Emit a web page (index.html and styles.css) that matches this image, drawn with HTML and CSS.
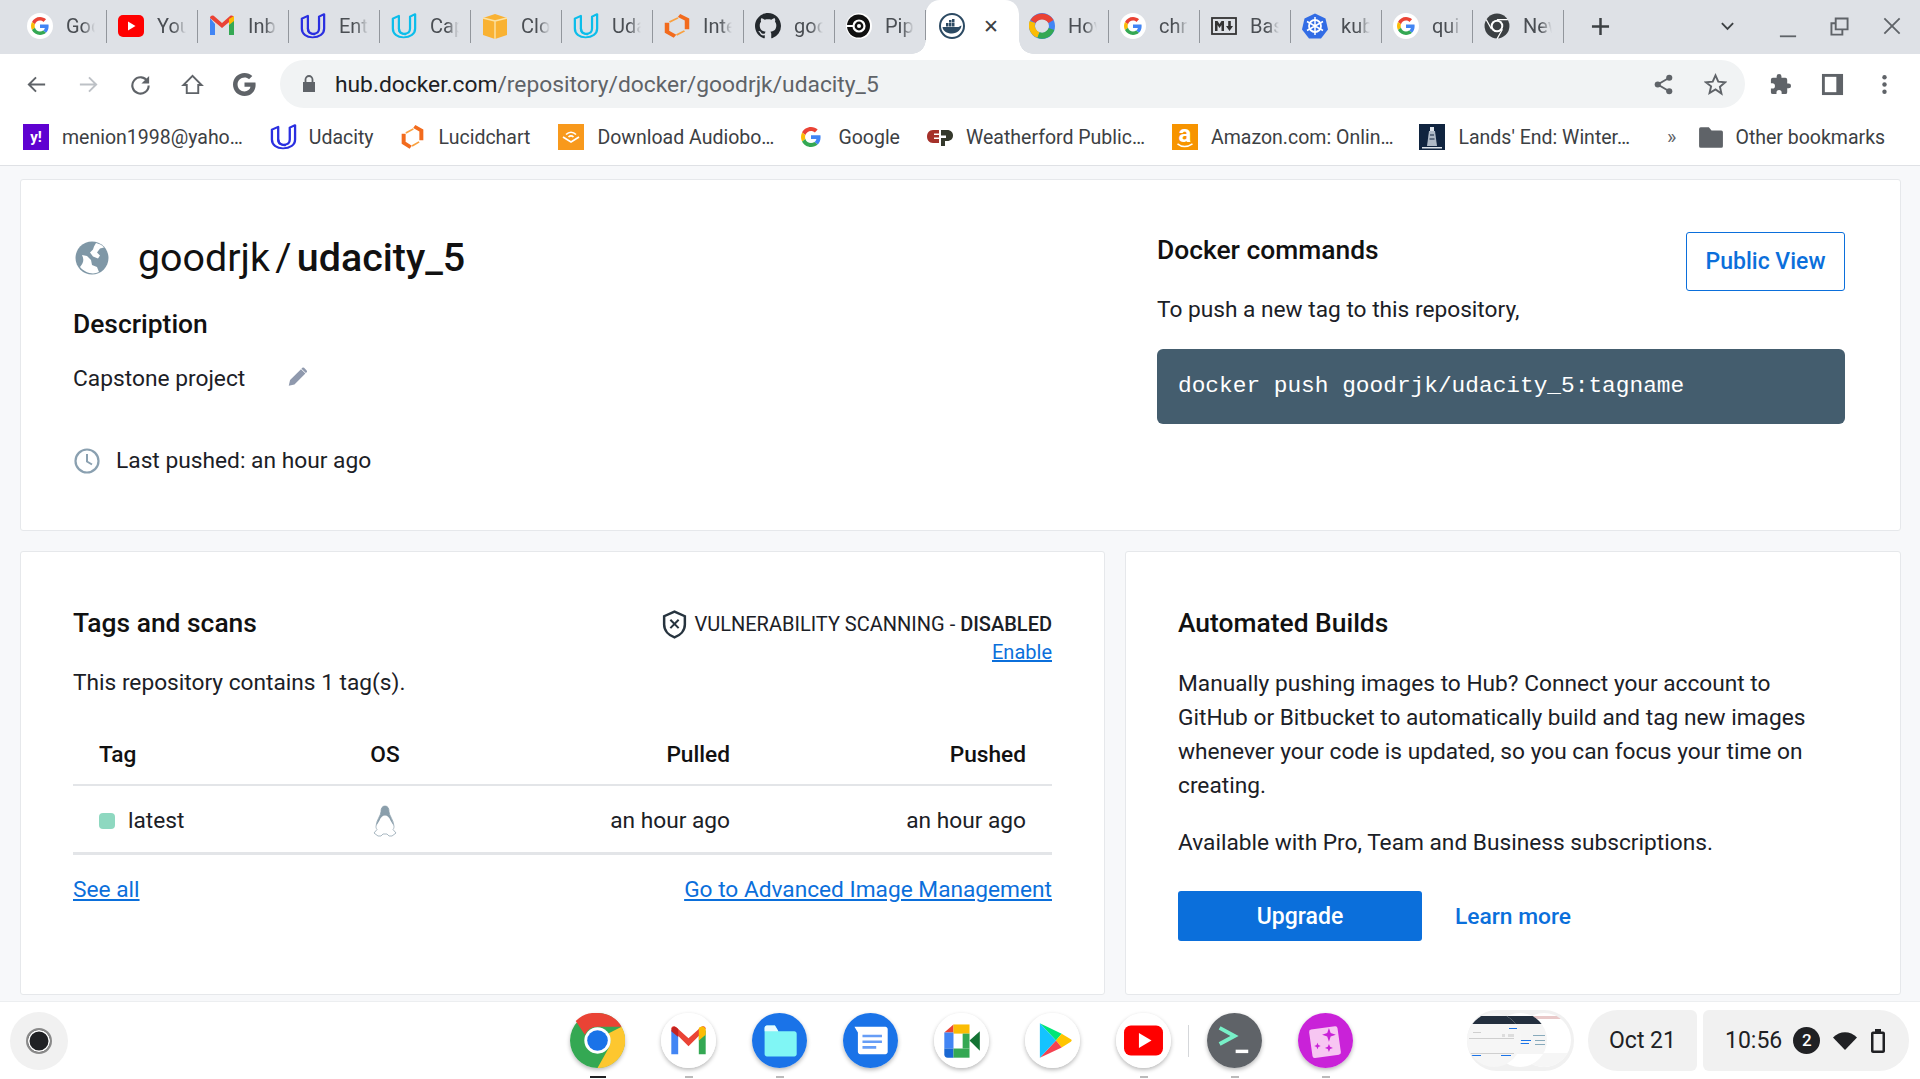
FILE: index.html
```html
<!DOCTYPE html>
<html lang="en">
<head>
<meta charset="utf-8">
<title>goodrjk / udacity_5</title>
<link rel="stylesheet" href="styles.css">
</head>
<body>
<svg class="defs" width="0" height="0" aria-hidden="true">
  <defs>
    <symbol id="g" viewBox="0 0 48 48">
      <path fill="#EA4335" d="M24 9.5c3.54 0 6.71 1.22 9.21 3.6l6.85-6.85C35.9 2.38 30.47 0 24 0 14.62 0 6.51 5.38 2.56 13.22l7.98 6.19C12.43 13.72 17.74 9.5 24 9.5z"/>
      <path fill="#4285F4" d="M46.98 24.55c0-1.57-.15-3.09-.38-4.55H24v9.02h12.94c-.58 2.96-2.26 5.48-4.78 7.18l7.73 6c4.51-4.18 7.09-10.36 7.09-17.65z"/>
      <path fill="#FBBC05" d="M10.53 28.59c-.48-1.45-.76-2.99-.76-4.59s.27-3.14.76-4.59l-7.98-6.19C.92 16.46 0 20.12 0 24c0 3.88.92 7.54 2.56 10.78l7.97-6.19z"/>
      <path fill="#34A853" d="M24 48c6.48 0 11.93-2.13 15.89-5.81l-7.73-6c-2.15 1.45-4.92 2.3-8.16 2.3-6.26 0-11.57-4.22-13.47-9.91l-7.98 6.19C6.51 42.62 14.62 48 24 48z"/>
    </symbol>
    <symbol id="gfav" viewBox="0 0 26 26">
      <circle cx="13" cy="13" r="13" fill="#fff"/>
      <svg x="4" y="4" width="18" height="18" viewBox="0 0 48 48"><use href="#g"/></svg>
    </symbol>
    <symbol id="uda" viewBox="0 0 28 32" preserveAspectRatio="none">
      <path fill="none" stroke="currentColor" stroke-width="2.400" stroke-linejoin="round" d="M2 7 8.500 3.500V19c0 4 2 6.500 5.500 6.500 4 0 6.500-2.500 6.500-6.500V4.500L26 1.500V19c0 7-5.500 11-12.500 11C7 30 2 26 2 19z"/>
      <path fill="none" stroke="currentColor" stroke-width="2.400" d="M8.500 19c.3 5 4 8 8 7"/>
    </symbol>
    <symbol id="lucid" viewBox="0 0 26 32" preserveAspectRatio="none">
      <path fill="none" stroke="#f26b1d" stroke-width="4.500" d="M3 12v11l8 5.500M15 3l8 5v12"/>
      <path fill="none" stroke="#f9a03f" stroke-width="2" d="M5.500 11 14 6M12.500 27l8-5"/>
    </symbol>
    <symbol id="chromedark" viewBox="0 0 24 24">
      <circle cx="12" cy="12" r="11.500" fill="#3c4043"/>
      <circle cx="12" cy="12" r="5.800" fill="#fff"/>
      <circle cx="12" cy="12" r="4" fill="#3c4043"/>
      <path fill="none" stroke="#fff" stroke-width="1.200" d="M12 6.200h10M7 15 2 6M17 15l-5 9"/>
    </symbol>
    <clipPath id="c1"><circle cx="27" cy="30" r="27"/></clipPath>
    <clipPath id="c2"><circle cx="53" cy="30" r="27"/></clipPath>
    <clipPath id="c3"><circle cx="77" cy="30" r="27"/></clipPath>
  </defs>
</svg>

<header class="tabstrip">
  <div class="tab"><svg class="fav" viewBox="0 0 26 26"><use href="#gfav"/></svg><span class="tab-title">Goo</span></div>
  <div class="tab"><svg class="fav" viewBox="0 0 26 26"><rect y="2" width="26" height="22" rx="5" fill="#f00"/><path d="M10 8.500v9l7.500-4.500z" fill="#fff"/></svg><span class="tab-title">You</span></div>
  <div class="tab"><svg class="fav" viewBox="0 0 26 26"><path d="M1 5v17h5V11z" fill="#4285f4"/><path d="M25 5v17h-5V11z" fill="#34a853"/><path d="M1 5c0-2 2-3 4-2l8 7 8-7c2-1 4 0 4 2L13 15z" fill="#ea4335"/><path d="M20 6l5-3v5l-5 4z" fill="#fbbc04"/></svg><span class="tab-title">Inb</span></div>
  <div class="tab"><svg class="fav c-uda-b" viewBox="0 0 26 26"><use href="#uda"/></svg><span class="tab-title">Ent</span></div>
  <div class="tab"><svg class="fav c-uda-l" viewBox="0 0 26 26"><use href="#uda"/></svg><span class="tab-title">Cap</span></div>
  <div class="tab"><svg class="fav" viewBox="0 0 26 26"><path d="M1 5l12-4 12 4v17l-12 4-12-4z" fill="#f9b233"/><path d="M1 5l12 3 12-3M13 8v18" stroke="#fce3a6" stroke-width="1.400" fill="none"/></svg><span class="tab-title">Clo</span></div>
  <div class="tab"><svg class="fav c-uda-l" viewBox="0 0 26 26"><use href="#uda"/></svg><span class="tab-title">Uda</span></div>
  <div class="tab"><svg class="fav" viewBox="0 0 26 26"><use href="#lucid"/></svg><span class="tab-title">Inte</span></div>
  <div class="tab"><svg class="fav" viewBox="0 0 16 16"><path fill="#24292e" d="M8 0C3.580 0 0 3.580 0 8c0 3.540 2.290 6.530 5.470 7.590.4.070.55-.17.55-.38 0-.19-.01-.82-.01-1.490-2.010.37-2.530-.49-2.690-.94-.09-.23-.48-.94-.82-1.130-.28-.15-.68-.52-.01-.53.630-.01 1.080.58 1.230.82.720 1.210 1.870.87 2.330.66.070-.52.280-.87.510-1.070-1.780-.2-3.640-.89-3.640-3.950 0-.87.310-1.590.820-2.150-.08-.2-.36-1.020.080-2.120 0 0 .67-.21 2.200.82.640-.18 1.320-.27 2-.27s1.360.09 2 .27c1.530-1.040 2.200-.82 2.200-.82.440 1.100.160 1.920.080 2.120.51.560.820 1.270.820 2.150 0 3.070-1.870 3.750-3.650 3.950.290.250.540.730.540 1.480 0 1.070-.01 1.930-.01 2.200 0 .21.150.46.550.38A8.010 8.010 0 0 0 16 8c0-4.420-3.580-8-8-8z"/></svg><span class="tab-title">goo</span></div>
  <div class="tab"><svg class="fav" viewBox="0 0 26 26"><circle cx="13" cy="13" r="13" fill="#fff"/><circle cx="12.500" cy="13" r="11.500" fill="#111"/><circle cx="13" cy="13" r="5.500" fill="none" stroke="#fff" stroke-width="2.200"/><circle cx="13" cy="13" r="2" fill="#fff"/><rect x="1" y="12" width="7" height="2" fill="#fff"/></svg><span class="tab-title">Pip</span></div>
  <div class="tab tab-active"><svg class="fav" viewBox="0 0 26 26"><circle cx="13" cy="13" r="12" fill="#fff" stroke="#2c4a63" stroke-width="2"/><path fill="#2c4a63" d="M3.500 14h16c1.500-.6 2.200-1.500 3-1.500-.5 4-4 8-9.500 8-5.500 0-9-2.500-9.500-6.500z"/><path fill="#2c4a63" d="M7 10h2.500v3.500H7zM10 10h2.500v3.500H10zM13 10h2.500v3.500H13zM10 7h2.500v2.500H10zM13 6h2.500v3.500H13z"/></svg><span class="tab-close">✕</span></div>
  <div class="tab"><svg class="fav" viewBox="0 0 26 26"><circle cx="13" cy="13" r="10" fill="none" stroke="#4285f4" stroke-width="6"/><path d="M4 8.500a10.500 10.500 0 0 1 18 0" fill="none" stroke="#ea4335" stroke-width="6"/><path d="M3.500 9a10 10 0 0 0 6 13" fill="none" stroke="#fbbc04" stroke-width="6"/><path d="M9.500 22a10 10 0 0 0 13-6" fill="none" stroke="#34a853" stroke-width="6"/></svg><span class="tab-title">Hov</span></div>
  <div class="tab"><svg class="fav" viewBox="0 0 26 26"><use href="#gfav"/></svg><span class="tab-title">chr</span></div>
  <div class="tab"><svg class="fav" viewBox="0 0 26 26"><rect x="1" y="5" width="24" height="16" fill="none" stroke="#333" stroke-width="1.800"/><path d="M4 18V8h2.500l2 3 2-3H13v10h-2.500v-6l-2 3-2-3v6zM15 13h2.200V8h2.600v5H22l-3.500 5z" fill="#333"/></svg><span class="tab-title">Bas</span></div>
  <div class="tab"><svg class="fav" viewBox="0 0 26 26"><path d="M13 .5 23.500 5.500 26 16.500 19 25.500H7L0 16.500 2.500 5.500z" fill="#326ce5"/><circle cx="13" cy="13" r="6" fill="none" stroke="#fff" stroke-width="1.800"/><path d="M13 4v18M5 8.500l16 9M21 8.500l-16 9" stroke="#fff" stroke-width="1.500"/></svg><span class="tab-title">kub</span></div>
  <div class="tab"><svg class="fav" viewBox="0 0 26 26"><use href="#gfav"/></svg><span class="tab-title">qui</span></div>
  <div class="tab"><svg class="fav" viewBox="0 0 24 24"><use href="#chromedark"/></svg><span class="tab-title">New</span></div>
  <span class="newtab"><svg viewBox="0 0 20 20"><path d="M10 1v18M1 10h18" stroke="#3c4043" stroke-width="2.600"/></svg></span>
  <span class="winbtns">
    <svg class="win-chev" viewBox="0 0 16 12"><path d="M2 3l6 6 6-6" fill="none" stroke="#3c4043" stroke-width="2"/></svg>
    <svg class="win-min" viewBox="0 0 20 20"><path d="M1 17h18" stroke="#5f6368" stroke-width="2"/></svg>
    <svg class="win-max" viewBox="0 0 20 20"><path d="M6 1.500h12.500V13H6zM6 6.500H1.500V18.500H13V13" fill="none" stroke="#5f6368" stroke-width="2"/></svg>
    <svg class="win-close" viewBox="0 0 20 20"><path d="M1.500 1.500l17 17M18.500 1.500l-17 17" stroke="#5f6368" stroke-width="2"/></svg>
  </span>
</header>

<nav class="toolbar">
  <span class="tool"><svg viewBox="0 0 24 24"><path d="M21 12H4M11.500 4.500 4 12l7.500 7.500" fill="none" stroke="#5f6368" stroke-width="2"/></svg></span>
  <span class="tool"><svg viewBox="0 0 24 24"><path d="M3 12h17M12.500 4.500 20 12l-7.500 7.500" fill="none" stroke="#bdc1c6" stroke-width="2"/></svg></span>
  <span class="tool"><svg viewBox="0 0 24 24"><path d="M19.500 9A8.500 8.500 0 1 0 20.500 13" fill="none" stroke="#5f6368" stroke-width="2.200"/><path d="M21 3v8h-8z" fill="#5f6368"/></svg></span>
  <span class="tool"><svg viewBox="0 0 24 24"><path d="M12 3 2.500 12.500H6V21h12v-8.500h3.500z" fill="none" stroke="#5f6368" stroke-width="2"/></svg></span>
  <span class="tool"><svg viewBox="0 0 48 48"><path fill="#5f6368" d="M24 20v8.800h12.500C35.400 34.500 30.500 38.500 24 38.500c-8 0-14.500-6.500-14.500-14.500S16 9.500 24 9.500c3.700 0 7 1.300 9.500 3.600l6.800-6.800C36 2.400 30.500 0 24 0 10.700 0 0 10.700 0 24s10.700 24 24 24c13.800 0 23.200-9.700 23.200-23.400 0-1.600-.2-3.200-.4-4.600z"/></svg></span>
  <div class="omnibox">
    <svg class="lock" viewBox="0 0 14 18"><path d="M1 7h12v10H1z" fill="#5f6368"/><path d="M3.500 7V4.500a3.500 3.500 0 0 1 7 0V7" fill="none" stroke="#5f6368" stroke-width="1.800"/></svg>
    <span class="url"><span class="url-host">hub.docker.com</span>/repository/docker/goodrjk/udacity_5</span>
    <span class="tool omni-tool"><svg viewBox="0 0 24 24"><path d="M18 5 6 12l12 7" fill="none" stroke="#5f6368" stroke-width="2"/><circle cx="18" cy="5" r="3.200" fill="#5f6368"/><circle cx="6" cy="12" r="3.200" fill="#5f6368"/><circle cx="18" cy="19" r="3.200" fill="#5f6368"/></svg></span>
    <span class="tool omni-tool"><svg viewBox="0 0 24 24"><path d="M12 2.500l2.900 6.500 7.100.7-5.400 4.700 1.600 7L12 17.200l-6.200 3.700 1.600-7L2 9.700 9.100 9z" fill="none" stroke="#5f6368" stroke-width="2"/></svg></span>
  </div>
  <span class="tool tool-gap"><svg viewBox="0 0 24 24"><path fill="#5f6368" d="M20.500 11H19V7a2 2 0 0 0-2-2h-4V3.500a2.500 2.500 0 0 0-5 0V5H4a2 2 0 0 0-2 2v3.800h1.500a2.700 2.700 0 0 1 0 5.400H2V20a2 2 0 0 0 2 2h3.800v-1.500a2.700 2.700 0 0 1 5.400 0V22H17a2 2 0 0 0 2-2v-4h1.500a2.500 2.500 0 0 0 0-5z"/></svg></span>
  <span class="tool"><svg viewBox="0 0 24 24"><rect x="1" y="1" width="22" height="22" fill="#5f6368"/><rect x="4" y="4" width="12" height="16" fill="#fff"/></svg></span>
  <span class="tool"><svg viewBox="0 0 24 24"><circle cx="12" cy="4.500" r="2.300" fill="#5f6368"/><circle cx="12" cy="12" r="2.300" fill="#5f6368"/><circle cx="12" cy="19.500" r="2.300" fill="#5f6368"/></svg></span>
</nav>

<nav class="bookmarks">
  <a class="bm"><span class="bm-tile tile-yahoo">y!</span><span>menion1998@yaho…</span></a>
  <a class="bm bm-udacity"><svg class="bm-ic c-uda-b" viewBox="0 0 28 32" preserveAspectRatio="none"><use href="#uda"/></svg><span>Udacity</span></a>
  <a class="bm bm-lucid"><svg class="bm-ic" viewBox="0 0 26 32" preserveAspectRatio="none"><use href="#lucid"/></svg><span>Lucidchart</span></a>
  <a class="bm"><svg class="bm-ic" viewBox="0 0 26 26"><rect width="26" height="26" fill="#f8991c"/><path d="M5 13l8 5 8-5M8 10.500c3-3 7-3 10 0M10.500 13c1.500-1.500 3.500-1.500 5 0" fill="none" stroke="#fff" stroke-width="1.700"/></svg><span>Download Audiobo…</span></a>
  <a class="bm bm-google"><svg class="bm-ic" viewBox="0 0 48 48"><use href="#g"/></svg><span>Google</span></a>
  <a class="bm"><svg class="bm-ic" viewBox="0 0 26 26"><path d="M12 6H6C2 6 0 9 0 12.500S2 19 6 19h6v-4H7v-1.500h5V11H7V9.500h5z" fill="#a5312a"/><path d="M14 6h6c4 0 6 2.500 6 5.500S24 17 20 17h-2v5h-4v-8h5v-2.500h-5z" fill="#35392c"/></svg><span>Weatherford Public…</span></a>
  <a class="bm bm-amazon"><span class="bm-tile tile-amazon">a<svg class="smile" viewBox="0 0 20 6"><path d="M1 1c5 4 12 4 18 0" fill="none" stroke="#fff" stroke-width="1.800"/></svg></span><span>Amazon.com: Onlin…</span></a>
  <a class="bm"><svg class="bm-ic" viewBox="0 0 26 26"><rect width="26" height="26" fill="#10243f"/><path d="M10 7h6l2 15H8z" fill="#aeb9c6"/><rect x="11" y="3" width="4" height="4" fill="#dfe5ec"/><path d="M3 23h20v1.500H3z" fill="#dfe5ec"/><path d="M11 11h4M10.500 15h5" stroke="#10243f" stroke-width="1.200"/></svg><span>Lands' End: Winter…</span></a>
  <span class="bm-more">»</span>
  <a class="bm bm-folder"><svg class="bm-ic" viewBox="0 0 24 24"><path d="M2.500 3H10l2.500 3H21.500a1.500 1.500 0 0 1 1.500 1.500V20.500a1.500 1.500 0 0 1-1.500 1.500H2.500A1.500 1.500 0 0 1 1 20.500V4.500A1.500 1.500 0 0 1 2.500 3z" fill="#5f6368"/></svg><span>Other bookmarks</span></a>
</nav>

<main class="page">
  <section class="card card-top">
    <div class="repo">
      <div class="repo-title">
        <svg class="globe" viewBox="0 0 34 34"><circle cx="17" cy="17" r="16.500" fill="#7f97a6"/><path fill="#fff" d="M5 26C9 21 9 18 7 14l5 1 4 4 1 5 5 2 2 5c-6 3-14 1-19-5zM21 2c3 .7 6 2 8 4.500l-4 1-3 4 3 3-2 3-5-2-3-4 3-3 1-3z"/></svg>
        <h1><span class="ns">goodrjk</span> <span class="sl">/</span> <strong>udacity_5</strong></h1>
      </div>
      <h2 class="h-desc">Description</h2>
      <div class="desc-row">
        <span>Capstone project</span>
        <svg class="pencil" viewBox="0 0 24 24"><path fill="#8f99ad" d="M2 22l1.500-6.500L16 3l5 5L8.500 20.500zM17.500 1.500a1.500 1.500 0 0 1 2 0l3 3a1.500 1.500 0 0 1 0 2L21.500 7.500l-5-5z"/></svg>
      </div>
      <div class="pushed">
        <svg class="clock" viewBox="0 0 26 26"><circle cx="13" cy="13" r="11.500" fill="none" stroke="#8aa0b0" stroke-width="2.200"/><path d="M13 6v7.500l5 3" fill="none" stroke="#8aa0b0" stroke-width="2"/></svg>
        <span>Last pushed: an hour ago</span>
      </div>
    </div>
    <div class="commands">
      <div class="commands-head">
        <div class="commands-text">
          <h2>Docker commands</h2>
          <p>To push a new tag to this repository,</p>
        </div>
        <a class="btn-outline">Public View</a>
      </div>
      <pre class="code">docker push goodrjk/udacity_5:tagname</pre>
    </div>
  </section>

  <div class="row">
    <section class="card card-tags">
      <div class="tags-head">
        <div>
          <h2>Tags and scans</h2>
          <p class="tags-count">This repository contains 1 tag(s).</p>
        </div>
        <div class="scan">
          <div class="scan-line">
            <svg class="shield" viewBox="0 0 24 28"><path d="M12 1.500 22 6v8c0 6-4.500 10.500-10 12.500C6.500 24.500 2 20 2 14V6z" fill="none" stroke="#27343f" stroke-width="2.400"/><path d="M8 9.500l8 8M16 9.500l-8 8" stroke="#27343f" stroke-width="2"/></svg>
            <span>VULNERABILITY SCANNING - <b>DISABLED</b></span>
          </div>
          <a class="link scan-enable">Enable</a>
        </div>
      </div>
      <div class="tbl">
        <div class="tr th"><span>Tag</span><span class="center">OS</span><span class="right">Pulled</span><span class="right">Pushed</span></div>
        <div class="tr td">
          <span class="tagname"><i class="dot"></i>latest</span>
          <span class="center"><svg class="tux" viewBox="0 0 26 32"><path d="M13 1c3 0 4 2.500 4 5.500 0 4 5 9 5 15 0 1.500-.5 2.500-1 3l3 3.500-4 3h-3l-2-2h-4l-2 2H6l-4-3 3-3.500c-.5-.5-1-1.500-1-3 0-6 5-11 5-15C9 3.500 10 1 13 1z" fill="#fff" stroke="#a9b8c2" stroke-width="1"/><path d="M13 1c3 0 4 2.500 4 5.500 0 4 4 8 4.500 14l-3-5c-1-3-3-5-5.500-5s-4.500 2-5.500 5l-3 5C5 14.500 9 10.500 9 6.500 9 3.500 10 1 13 1z" fill="#8a9eab"/></svg></span>
          <span class="right">an hour ago</span>
          <span class="right">an hour ago</span>
        </div>
      </div>
      <div class="tags-foot">
        <a class="link">See all</a>
        <a class="link">Go to Advanced Image Management</a>
      </div>
    </section>
    <section class="card card-auto">
      <h2>Automated Builds</h2>
      <p class="auto-copy">Manually pushing images to Hub? Connect your account to GitHub or Bitbucket to automatically build and tag new images whenever your code is updated, so you can focus your time on creating.</p>
      <p class="auto-avail">Available with Pro, Team and Business subscriptions.</p>
      <div class="auto-actions">
        <a class="btn-primary">Upgrade</a>
        <a class="learn">Learn more</a>
      </div>
    </section>
  </div>
</main>

<footer class="shelf">
  <span class="launcher"><i></i></span>
  <div class="apps">
    <span class="app on-dark"><svg viewBox="0 0 48 48"><circle cx="24" cy="24" r="24" fill="#34a853"/><path d="M24 0a24 24 0 0 1 21 12H24a12 12 0 0 0-11 7L5 7a24 24 0 0 1 19-7z" fill="#ea4335"/><path d="M45 12a24 24 0 0 1-21 36l10-18a12 12 0 0 0-1-12z" fill="#fdc72f"/><circle cx="24" cy="24" r="11.500" fill="#fff"/><circle cx="24" cy="24" r="9" fill="#1a73e8"/></svg></span>
    <span class="app on"><svg viewBox="0 0 48 48"><circle cx="24" cy="24" r="24" fill="#fff"/><path d="M9 15v21h6V20z" fill="#4285f4"/><path d="M39 15v21h-6V20z" fill="#34a853"/><path d="M9 14c0-3 3-3 5-1l10 9 10-9c2-2 5-2 5 1l-15 15z" fill="#ea4335"/><path d="M33 13c2-2 6-2 6 2v4l-6 5z" fill="#fbbc04"/><path d="M9 15c0-3 3-4 5-2l1 1v7l-6-5z" fill="#c5221f"/></svg></span>
    <span class="app on"><svg viewBox="0 0 48 48"><circle cx="24" cy="24" r="24" fill="#1a73e8"/><path d="M11 13c0-1 1-2 2-2h7l3 5h14c1 0 2 1 2 2v18c0 1-1 2-2 2H13c-1 0-2-1-2-2z" fill="#80f6f5"/><path d="M11 16h12l-3-5h-7c-1 0-2 1-2 2z" fill="#e8fbff"/></svg></span>
    <span class="app"><svg viewBox="0 0 48 48"><circle cx="24" cy="24" r="24" fill="#1a73e8"/><path d="M10 12h27c1 0 2 1 2 2v20c0 1-1 2-2 2H15c-1 0-2-1-2-2V17z" fill="#fff"/><path d="M17 20h17M17 25h17M17 30h12" stroke="#669df6" stroke-width="2.200"/></svg></span>
    <span class="app"><svg viewBox="0 0 48 48"><circle cx="24" cy="24" r="24" fill="#fff"/><path d="M9 17l8-7v7z" fill="#ea4335"/><path d="M17 10h14v8H17z" fill="#fbbc04"/><path d="M9 17h8v14H9z" fill="#4285f4"/><path d="M9 31h8v8h-5c-2 0-3-1-3-3z" fill="#1967d2"/><path d="M17 31h14v8H17z" fill="#34a853"/><path d="M31 24l9-8v17z" fill="#137333"/><path d="M31 18v13H25V18z" fill="#34a853"/></svg></span>
    <span class="app"><svg viewBox="0 0 48 48"><circle cx="24" cy="24" r="24" fill="#fff"/><path d="M13 9l19 9-5 6z" fill="#00e676"/><path d="M32 18l8 5c1 .6 1 1.400 0 2l-8 5-5-6z" fill="#ffc400"/><path d="M13 39l14-15 5 6z" fill="#f44351"/><path d="M13 9v30l14-15z" fill="#14c3ff"/></svg></span>
    <span class="app on has-sep"><svg viewBox="0 0 48 48"><circle cx="24" cy="24" r="24" fill="#fff"/><rect x="7" y="11" width="34" height="26" rx="6" fill="#f00"/><path d="M20 17.500v13l11-6.500z" fill="#fff"/></svg></span>
    <span class="app on"><svg viewBox="0 0 48 48"><circle cx="24" cy="24" r="24" fill="#5f6368"/><path d="M11 13l13 7-13 7" fill="none" stroke="#78f0c8" stroke-width="3.400"/><path d="M25 32h11v3H25z" fill="#fff"/></svg></span>
    <span class="app on"><svg viewBox="0 0 48 48"><circle cx="24" cy="24" r="24" fill="#c922d8"/><rect x="11" y="13" width="25" height="25" rx="2" fill="#f7c6f2" transform="rotate(-8 23 25)"/><path d="M27 13l1.500 4.500L33 19l-4.500 1.500L27 25l-1.500-4.500L21 19l4.500-1.500zM27 27l1 2.500 2.500 1-2.500 1-1 2.500-1-2.500-2.500-1 2.500-1zM17 26l.8 2 2 .8-2 .8-.8 2-.8-2-2-.8 2-.8z" fill="#c922d8"/></svg></span>
  </div>
  <div class="tray">
    <span class="thumbs"><svg viewBox="0 0 107 61"><rect width="107" height="61" rx="30" fill="#f1f1f1"/>
      <g clip-path="url(#c3)"><rect x="50" width="57" height="61" fill="#fff"/><rect x="50" y="43" width="57" height="18" fill="#f6f6f6"/><rect x="50" y="6" width="57" height="3" fill="#e8c9c9"/></g>
      <g clip-path="url(#c2)"><rect x="26" width="54" height="61" fill="#fff"/><rect x="26" y="6" width="54" height="8" fill="#232f3e"/><rect x="26" y="14" width="54" height="30" fill="#f5f5f5"/><path d="M50 30h14v1H50zM50 33h12v1H50z" fill="#1a73e8"/><path d="M66 25h12v1H66zM68 30h10v1H68zM68 34h10v1H68z" fill="#8ab"/></g>
      <g clip-path="url(#c1)"><rect width="54" height="61" fill="#f6f6f6"/><rect y="6" width="54" height="8" fill="#232f3e"/><path d="M6 22h8v1H6zM2 28h45v1H2zM2 43h45v1H2z" fill="#cfcfcf"/><path d="M4 45h10v1H4zM34 45h10v1H34zM42 18h8v1h-8z" fill="#1a73e8"/><path d="M35 24h3v3h-3zM41 24h6v3h-6z" fill="#ddd"/></g>
    </svg></span>
    <span class="pill pill-date">Oct 21</span>
    <span class="pill pill-time">10:56
      <i class="badge">2</i>
      <svg class="wifi" viewBox="0 0 24 18"><path d="M0 5.500C7-1.500 17-1.500 24 5.500L12 18z" fill="#202124"/></svg>
      <svg class="batt" viewBox="0 0 14 24"><path d="M4 0h6v2.500h2c1 0 2 .8 2 2V22c0 1-1 2-2 2H2c-1 0-2-1-2-2V4.500c0-1.200 1-2 2-2h2zM2.500 5v16.500h9V5z" fill="#202124"/></svg>
    </span>
  </div>
</footer>
</body>
</html>
```

FILE: styles.css
```css
* { box-sizing: border-box; }
html, body { margin: 0; height: 100%; }
body {
  width: 1920px; height: 1079px; overflow: hidden;
  display: flex; flex-direction: column;
  background: #f7f8fa;
  font-family: Roboto, "Noto Sans", sans-serif;
  color: #1b2026;
}
.defs { position: absolute; }
h1, h2, p, pre { margin: 0; }

/* Tab strip */
.tabstrip {
  height: 54px; flex: none; background: #dee1e6;
  display: flex; align-items: stretch; padding-left: 16px;
}
.tab {
  width: 91px; flex: none; position: relative;
  display: flex; align-items: center; padding: 0 6px 2px 11px; gap: 13px;
  font-size: 20px; color: #4a4e53;
}
.tab::after {
  content: ""; position: absolute; right: 0; top: 10px; height: 33px; width: 1.5px; background: #92969c;
}
.fav { width: 26px; height: 26px; flex: none; color: #000; }
.c-uda-b { color: #2a2fe0; }
.c-uda-l { color: #0cbdea; }
.tab-title {
  flex: 1; min-width: 0; white-space: nowrap;
  -webkit-mask-image: linear-gradient(90deg, #000 17px, transparent 29px);
  mask-image: linear-gradient(90deg, #000 17px, transparent 29px);
}
.tab-active {
  background: #fff; border-radius: 14px 14px 0 0; width: 93px; margin-right: -1px; padding-left: 13px; gap: 18px; z-index: 1;
}
.tab-active::after { display: none; }
.tab-active::before {
  content: ""; position: absolute; left: -14px; right: -14px; bottom: 0; height: 14px; z-index: -1;
  background:
    radial-gradient(circle at 0 0, #dee1e6 13.5px, #fff 14px) left bottom / 14px 14px no-repeat,
    radial-gradient(circle at 100% 0, #dee1e6 13.5px, #fff 14px) right bottom / 14px 14px no-repeat;
}
.tab-close { font-size: 19px; color: #3c4043; }
.newtab { width: 19px; margin-left: 27px; display: flex; align-items: center; padding-bottom: 2px; }
.newtab svg { width: 19px; height: 19px; }
.winbtns { flex: 1; display: flex; align-items: center; padding-bottom: 2px; }
.winbtns svg { flex: none; }
.win-chev { width: 15px; height: 12px; margin-left: 110px; }
.win-min { width: 18px; height: 18px; margin-left: 44px; margin-top: 7px; }
.win-max { width: 19px; height: 19px; margin-left: 33px; }
.win-close { width: 18px; height: 18px; margin-left: 34px; }

/* Toolbar */
.toolbar {
  height: 60px; flex: none; background: #fff; display: flex; align-items: center; padding: 0 10px;
}
.tool { width: 52px; height: 48px; flex: none; display: flex; align-items: center; justify-content: center; }
.tool svg { width: 23px; height: 23px; }
.omnibox {
  flex: 1; height: 48px; margin-left: 10px; border-radius: 24px; background: #f1f3f4;
  display: flex; align-items: center; padding: 0 4px 0 22px;
}
.lock { width: 14px; height: 18px; flex: none; }
.url { flex: 1; margin-left: 19px; font-size: 22.8px; color: #5f6368; white-space: nowrap; }
.url-host { color: #202124; }
.tool-gap { margin-left: 9px; }

/* Bookmarks */
.bookmarks {
  height: 52px; flex: none; background: #fff; border-bottom: 1px solid #dfe1e5;
  display: flex; align-items: center; padding: 0 0 5px 23px; font-size: 19.5px; color: #3c4043;
}
.bm { display: flex; align-items: center; gap: 13px; margin-right: 27px; white-space: nowrap; }
.bm-ic { width: 26px; height: 26px; flex: none; }
.bm-udacity { gap: 12px; }
.bm-udacity .bm-ic { width: 27px; }
.bm-lucid { gap: 15px; margin-right: 28px; }
.bm-lucid .bm-ic { width: 23px; }
.bm-google { gap: 17px; }
.bm-google .bm-ic { width: 20px; height: 20px; }
.bm-amazon { margin-right: 26px; }
.bm-tile {
  width: 26px; height: 26px; flex: none; display: flex; align-items: center; justify-content: center; position: relative;
  color: #fff; font-weight: 700;
}
.tile-yahoo { background: #5f01d1; font-size: 15px; }
.tile-amazon { background: #f79400; font-size: 24px; padding-bottom: 6px; }
.smile { position: absolute; left: 4px; bottom: 2px; width: 18px; height: 5px; }
.bm-more { margin-left: 10px; font-size: 20px; color: #5f6368; margin-right: 22px; }
.bm-folder { margin-right: 0; gap: 11px; }

/* Page */
.page { flex: 1; min-height: 0; padding: 13px 19px 0 20px; display: flex; flex-direction: column; gap: 20px; }
.card { background: #fff; border: 1px solid #e6e8eb; border-radius: 3px; }
.card h2 { font-size: 26.4px; font-weight: 500; color: #111; line-height: 32px; }
.card-top {
  height: 352px; flex: none; display: flex; justify-content: space-between; padding: 0 55px 0 52px;
}
.repo { padding-top: 54px; font-size: 22.75px; }
.repo-title { display: flex; align-items: center; gap: 29px; }
.globe { width: 34px; height: 40px; flex: none; margin-left: 2px; }
h1 { font-size: 39.4px; font-weight: 400; line-height: 48px; color: #111; white-space: nowrap; }
h1 strong { font-weight: 500; }
.sl { margin: 0 -4.5px; }
.h-desc { margin-top: 26px; }
.desc-row { display: flex; align-items: center; gap: 42px; margin-top: 24px; line-height: 30px; }
.pencil { width: 21px; height: 22px; margin-top: -4px; }
.pushed { display: flex; align-items: center; gap: 16px; margin-top: 52px; line-height: 30px; padding-left: 1px; }
.clock { width: 26px; height: 26px; }
.commands { width: 688px; padding-top: 52px; font-size: 22.7px; }
.commands-head { display: flex; justify-content: space-between; }
.commands-text p { margin-top: 29px; line-height: 30px; }
.commands-text h2 { margin-top: 2px; }
.btn-outline {
  width: 159px; height: 59px; border: 1.5px solid #0b6fdb; border-radius: 3px; color: #0b6fdb;
  font-size: 23px; font-weight: 500; display: flex; align-items: center; justify-content: center;
}
.code {
  margin-top: 24px; height: 75px; background: #445d6e; border-radius: 6px; padding: 0 21px 1px;
  display: flex; align-items: center;
  color: #fff; font: 22.8px/1 "Liberation Mono", monospace;
}

.row { flex: none; display: flex; gap: 20px; height: 444px; }
.card-tags { width: 1085px; padding: 55px 52px 0; font-size: 22.7px; }
.card-auto { flex: 1; padding: 55px 53px 0 52px; font-size: 22.7px; }
.tags-head { display: flex; justify-content: space-between; }
.tags-count { margin-top: 29px; line-height: 30px; }
.scan { text-align: right; font-size: 20px; }
.scan-line { display: flex; align-items: center; gap: 8px; line-height: 29px; margin-top: 3px; }
.shield { width: 25px; height: 29px; }
.scan b { font-weight: 500; }
.scan-enable { display: block; line-height: 26px; }
.link { color: #0b6fdb; text-decoration: underline; }
.tbl { margin-top: 26px; }
.tr { display: grid; grid-template-columns: 260px 52px 319px 296px; padding: 0 26px; align-items: center; }
.th { height: 62px; border-bottom: 2px solid #e3e5e8; font-weight: 500; color: #111; }
.td { height: 69px; border-bottom: 3px solid #e3e5e8; padding-top: 3px; }
.center { text-align: center; }
.right { text-align: right; }
.tagname { display: flex; align-items: center; gap: 13px; }
.dot { width: 16px; height: 16px; border-radius: 4px; background: #8ed8c0; }
.tux { width: 26px; height: 32px; display: block; margin: 0 auto; }
.tags-foot { display: flex; justify-content: space-between; margin-top: 20px; line-height: 30px; }
.auto-copy { margin-top: 28px; line-height: 34px; max-width: 640px; }
.auto-avail { margin-top: 23px; line-height: 34px; }
.auto-actions { display: flex; align-items: center; gap: 33px; margin-top: 31px; }
.btn-primary {
  width: 244px; height: 50px; background: #0b6fdb; color: #fff; border-radius: 3px;
  font-weight: 500; font-size: 23px; display: flex; align-items: center; justify-content: center;
}
.learn { color: #0b6fdb; font-weight: 500; font-size: 22.8px; }

/* Shelf */
.shelf {
  height: 78px; flex: none; background: #fff; border-top: 1px solid #eceef0;
  display: flex; align-items: center; padding-left: 10px;
}
.launcher {
  width: 58px; height: 58px; border-radius: 50%; background: #f1f1f1; flex: none;
  display: flex; align-items: center; justify-content: center;
}
.launcher i { width: 26px; height: 26px; border-radius: 50%; background: #202124; border: 2px solid #8a8a8a; box-shadow: inset 0 0 0 1.5px #fff; }
.apps { display: flex; gap: 36px; margin-left: 502px; }
.app { width: 55px; height: 55px; position: relative; border-radius: 50%; box-shadow: 0 2px 4px rgba(0,0,0,.28); }
.app svg { width: 55px; height: 55px; display: block; }
.on::after, .on-dark::after {
  content: ""; position: absolute; left: 50%; margin-left: -4px; bottom: -10px; width: 8px; height: 2px; background: #bbb;
}
.on-dark::after { background: #202124; width: 16px; margin-left: -8px; }
.has-sep::before {
  content: ""; position: absolute; right: -18px; top: 12px; width: 1px; height: 32px; background: #d5d7da;
}
.tray { display: flex; gap: 6px; padding-right: 11px; margin-left: 114px; }
.thumbs { width: 107px; height: 61px; }
.thumbs svg { width: 107px; height: 61px; display: block; }
.pill {
  height: 61px; background: #f1f1f1; display: flex; align-items: center; font-size: 23px; color: #202124;
}
.pill-date { width: 109px; margin-left: 8px; justify-content: center; border-radius: 30px 6px 6px 30px; }
.pill-time { width: 206px; padding-left: 22px; border-radius: 6px 30px 30px 6px; gap: 11px; }
.badge {
  width: 27px; height: 27px; border-radius: 50%; background: #202124; color: #fff; font: 500 17px/27px Roboto, sans-serif; text-align: center;
}
.wifi { width: 24px; height: 18px; margin-left: 2px; }
.batt { width: 14px; height: 24px; margin-left: 3px; }
```
